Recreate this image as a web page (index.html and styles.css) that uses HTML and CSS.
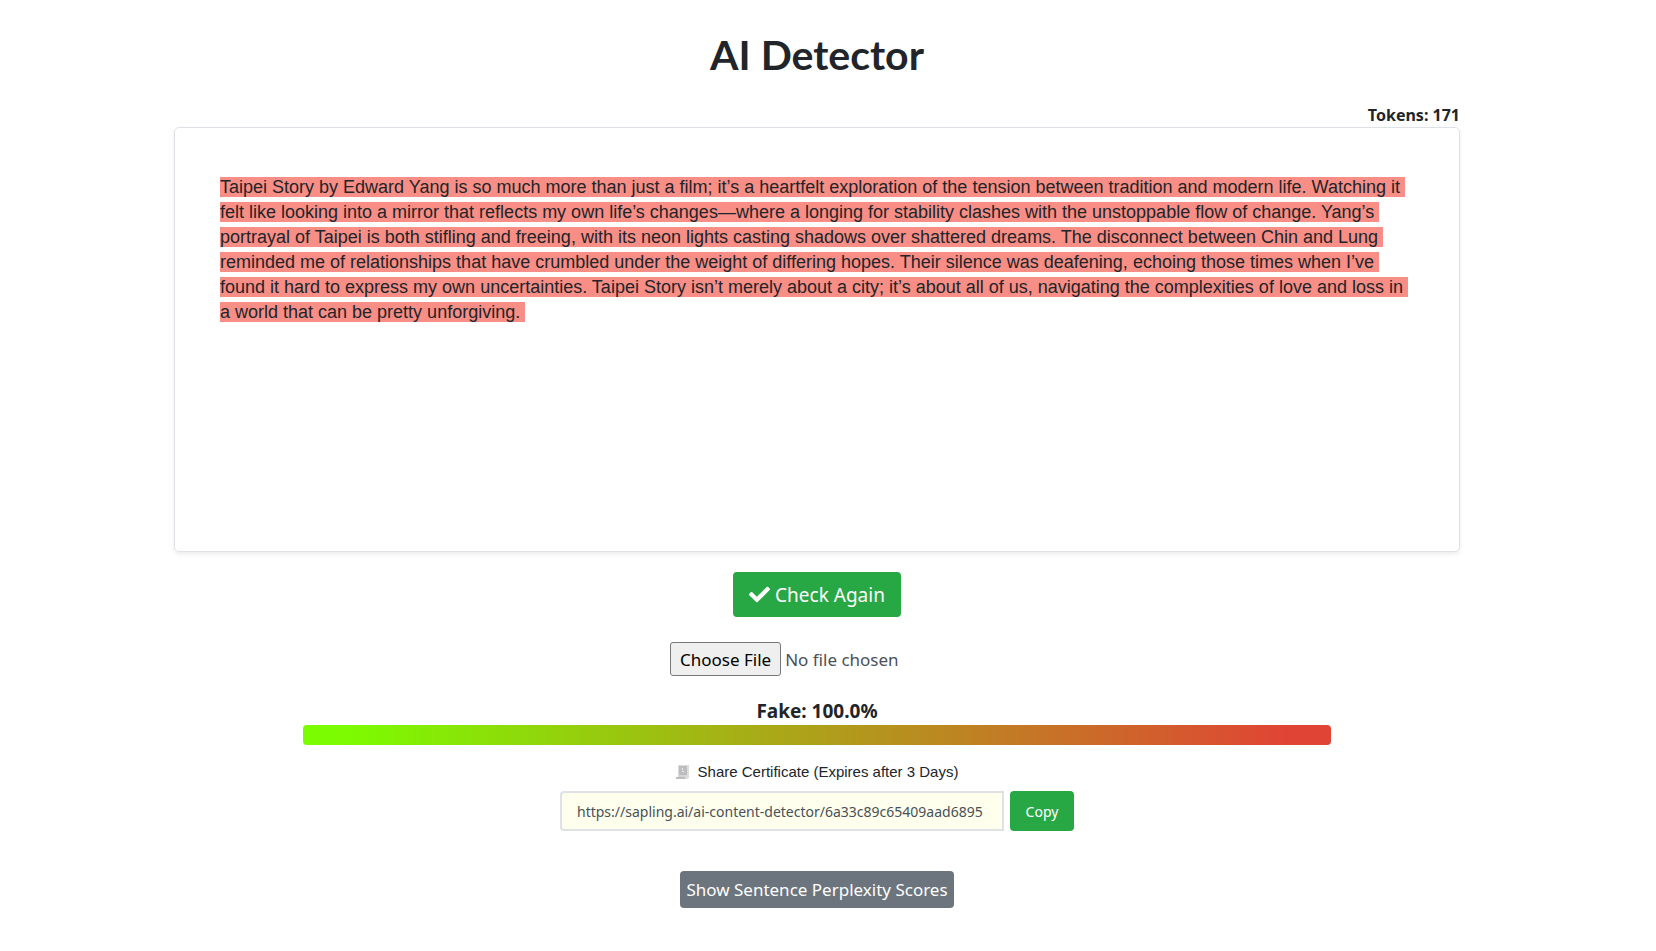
FILE: index.html
```html
<!DOCTYPE html>
<html lang="en">
<head>
<meta charset="utf-8">
<meta name="viewport" content="width=device-width, initial-scale=1">
<title>AI Detector</title>
<link rel="stylesheet" href="styles.css">
</head>
<body>
<main class="page">
  <h1 class="title">AI Detector</h1>
  <section class="editor">
    <div class="tokens">Tokens: 171</div>
    <div class="panel">
      <p class="text"><mark class="flagged">Taipei Story by Edward Yang is so much more than just a film; it’s a heartfelt exploration of the tension between tradition and modern life. Watching it felt like looking into a mirror that reflects my own life’s changes—where a longing for stability clashes with the unstoppable flow of change. Yang’s portrayal of Taipei is both stifling and freeing, with its neon lights casting shadows over shattered dreams. The disconnect between Chin and Lung reminded me of relationships that have crumbled under the weight of differing hopes. Their silence was deafening, echoing those times when I’ve found it hard to express my own uncertainties. Taipei Story isn’t merely about a city; it’s about all of us, navigating the complexities of love and loss in a world that can be pretty unforgiving.</mark></p>
    </div>
  </section>
  <button class="btn btn-check" type="button">
    <svg class="check-icon" viewBox="0 0 512 512" aria-hidden="true"><path fill="currentColor" d="M173.9 439.4 7.5 273c-10-10-10-26.200 0-36.200l36.200-36.200c10-10 26.200-10 36.200 0L192 312.700 432.100 72.600c10-10 26.200-10 36.200 0l36.200 36.200c10 10 10 26.200 0 36.200L210.100 439.400c-10 10-26.200 10-36.200 0z"/></svg>
    <span>Check Again</span>
  </button>
  <input class="file" type="file" aria-label="Choose a file to check">
  <section class="result">
    <div class="score">Fake: 100.0%</div>
    <div class="meter"></div>
  </section>
  <section class="share">
    <label class="share-label" for="share-url">
      <svg class="scroll-icon" viewBox="0 0 14 16" aria-hidden="true"><path fill="#dcdcdc" d="M2 1h11v13l-2 1H0v-2h2z"/><path fill="#bdbdbf" d="M3 2h8v9H3zM0 13h9v2H0z"/><path fill="#d4d4d4" d="M2 11h8v2H2z"/><path fill="#ececec" d="M6 4h1v2H6zM6 7h2v1H6z"/></svg>
      <span>Share Certificate (Expires after 3 Days)</span>
    </label>
    <div class="share-row">
      <input class="share-url" id="share-url" type="text" readonly value="https://sapling.ai/ai-content-detector/6a33c89c65409aad6895">
      <button class="btn btn-copy" type="button">Copy</button>
    </div>
  </section>
  <button class="btn btn-scores" type="button">Show Sentence Perplexity Scores</button>
</main>
</body>
</html>
```
FILE: styles.css
```css
* {
  box-sizing: border-box;
}

body {
  margin: 0;
  padding-right: 22px;
  background: #fff;
  color: #212529;
  font-family: "Noto Sans", "Open Sans", sans-serif;
  font-size: 16px;
}

.page {
  display: flex;
  flex-direction: column;
  align-items: center;
  padding: 29px 16px 40px;
}

.title {
  margin: 0;
  font-family: Lato, sans-serif;
  font-size: 41px;
  font-weight: 700;
  line-height: 52px;
}

.editor {
  width: 100%;
  max-width: 1286px;
  margin-top: 22px;
}

.tokens {
  font-weight: 700;
  line-height: 24px;
  text-align: right;
}

.panel {
  min-height: 425px;
  padding: 47px 45px;
  border: 1px solid #dee2e6;
  border-radius: 5px;
  box-shadow: 0 2px 4px rgba(0, 0, 0, 0.08);
}

.text {
  margin: 0;
  font-family: "Liberation Sans", Arial, sans-serif;
  font-size: 18px;
  line-height: 25px;
}

.flagged {
  padding-right: 5px;
  background: #f98e86;
  color: inherit;
  -webkit-box-decoration-break: clone;
  box-decoration-break: clone;
}

.btn {
  display: inline-flex;
  align-items: center;
  justify-content: center;
  border: 0;
  border-radius: 4px;
  background: #28a745;
  color: #fff;
  font-family: inherit;
}

.btn-check {
  gap: 5px;
  height: 45px;
  margin-top: 20px;
  padding: 0 16px;
  font-size: 19px;
}

.check-icon {
  width: 21px;
  height: 21px;
}

.file {
  width: 294px;
  margin-top: 25px;
  color: #495057;
  font-family: inherit;
  font-size: 17px;
}

.file::file-selector-button {
  height: 34px;
  margin-right: 4px;
  padding: 0 9px;
  border: 1px solid #76797c;
  border-radius: 3px;
  background: #efefef;
  color: #000;
  font-family: inherit;
  font-size: 17px;
}

.result {
  display: flex;
  flex-direction: column;
  align-items: center;
  width: 80%;
  max-width: 1028px;
  margin-top: 21px;
}

.score {
  font-size: 19px;
  font-weight: 700;
  line-height: 28px;
}

.meter {
  width: 100%;
  height: 20px;
  border-radius: 4px;
  background: linear-gradient(90deg, #7cfc00 4%, #e04434 96%);
}

.share {
  display: flex;
  flex-direction: column;
  align-items: center;
  margin-top: 15px;
}

.share-label {
  display: flex;
  align-items: center;
  gap: 8px;
  font-family: "Liberation Sans", Arial, sans-serif;
  font-size: 15px;
  line-height: 23px;
}

.scroll-icon {
  width: 14px;
  height: 16px;
}

.share-row {
  display: flex;
  gap: 6px;
  margin-top: 8px;
}

.share-url {
  width: 444px;
  height: 40px;
  padding: 0 15px;
  border: 2px solid #dee2e6;
  border-radius: 4px 0 0 4px;
  background: #ffffed;
  color: #495057;
  font-family: inherit;
  font-size: 14px;
}

.btn-copy {
  width: 64px;
  height: 40px;
  padding: 0;
  font-size: 14px;
}

.btn-scores {
  height: 37px;
  margin-top: 40px;
  padding: 0 6px;
  background: #6c757d;
  font-size: 17px;
}
```
